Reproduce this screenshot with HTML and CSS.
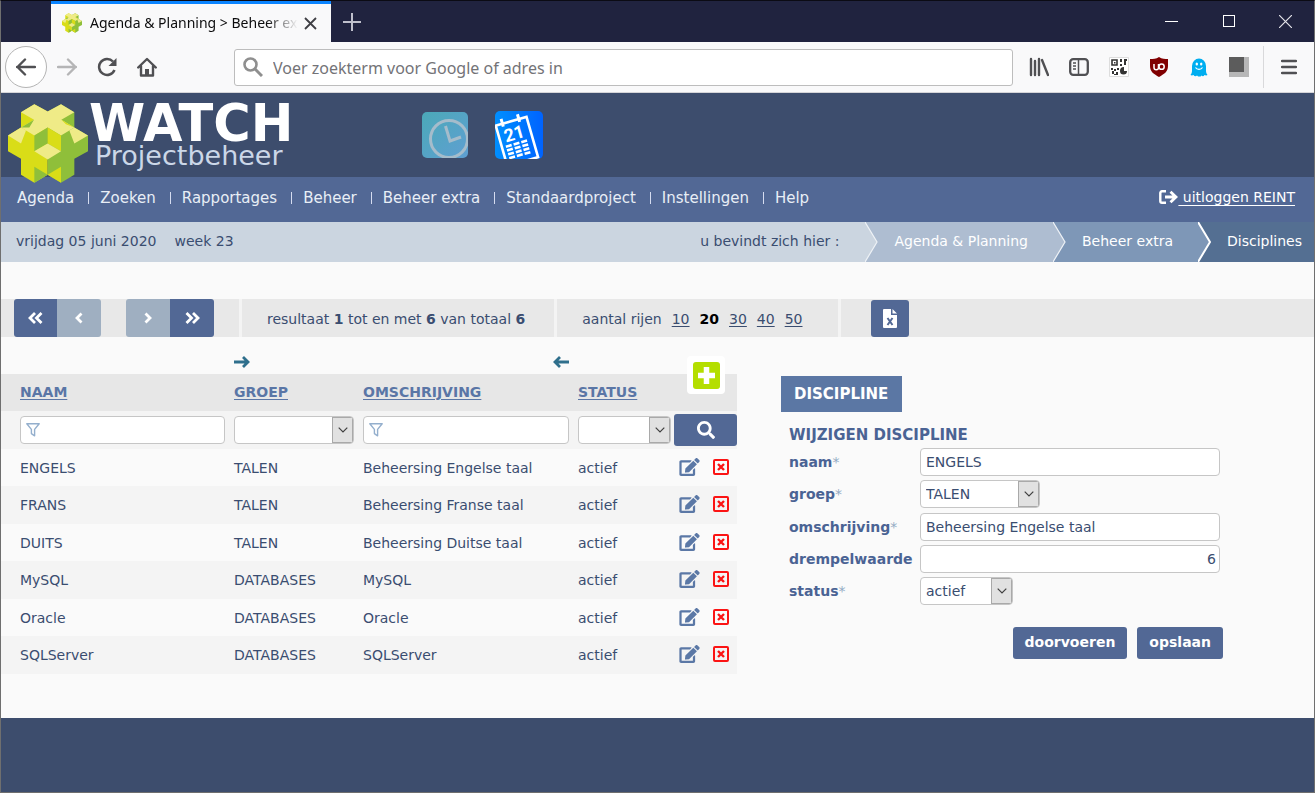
FILE: index.html
```html
<!DOCTYPE html>
<html lang="nl">
<head>
<meta charset="utf-8">
<title>Agenda &amp; Planning &gt; Beheer extra</title>
<link rel="stylesheet" href="styles.css">
</head>
<body>
<svg class="defs" aria-hidden="true">
  <symbol id="cube" viewBox="24 42 240 236">
    <path fill="#d9dd17" d="M63 66 103 42 143 64 143 254 103 278 63 254 63 206 24 183 24 136 63 112z"/>
    <path fill="#8fbf3a" d="M223 66 183 42 143 64 143 254 183 278 223 254 223 206 264 183 264 136 223 112z"/>
    <path fill="#efeb87" d="M63 66 103 42 143 64 183 42 223 66 184 89 223 112 183 136 143 112 103 136 63 112 102 89z"/>
    <path fill="#efeb87" d="M24 136 63 112 78 121 63 160zM264 136 223 112 208 121 223 160z"/>
    <path fill="#8fbf3a" d="M102 89 63 112 88 112zM103 136 143 112 143 160 103 183zM103 230 143 254 103 278z"/>
    <path fill="#d9dd17" d="M184 89 223 112 198 102zM143 112 183 136 183 183 143 160zM183 230 143 254 183 278z"/>
    <path fill="#efeb87" d="M103 183 143 160 183 183 143 208z"/>
  </symbol>
  <symbol id="edit" viewBox="0 0 576 512"><path fill="currentColor" d="M402.6 83.2l90.2 90.2c3.8 3.8 3.8 10 0 13.8L274.4 405.6l-92.8 10.3c-12.4 1.4-22.9-9.1-21.5-21.5l10.3-92.8L388.8 83.2c3.8-3.8 10-3.8 13.8 0zm162-22.9l-48.8-48.8c-15.2-15.2-39.9-15.2-55.2 0l-35.4 35.4c-3.8 3.8-3.8 10 0 13.8l90.2 90.2c3.8 3.8 10 3.8 13.8 0l35.4-35.4c15.2-15.3 15.2-40 0-55.2zM384 346.2V448H64V128h229.8c3.2 0 6.2-1.3 8.5-3.5l40-40c7.6-7.6 2.2-20.5-8.5-20.5H48C21.5 64 0 85.5 0 112v352c0 26.5 21.5 48 48 48h352c26.5 0 48-21.5 48-48V306.2c0-10.7-12.9-16-20.5-8.5l-40 40c-2.2 2.3-3.5 5.3-3.5 8.5z"/></symbol>
  <symbol id="delete" viewBox="0 0 16 16"><rect x="1" y="1" width="14" height="14" rx="1" fill="none" stroke="currentColor" stroke-width="2"/><path d="M5 5l6 6M11 5l-6 6" stroke="currentColor" stroke-width="2.4"/></symbol>
  <symbol id="search" viewBox="0 0 512 512"><path fill="currentColor" d="M505 442.7L405.3 343c-4.5-4.5-10.6-7-17-7H372c27.6-35.3 44-79.7 44-128C416 93.1 322.9 0 208 0S0 93.1 0 208s93.1 208 208 208c48.3 0 92.7-16.4 128-44v16.3c0 6.4 2.5 12.5 7 17l99.7 99.7c9.4 9.4 24.6 9.4 33.9 0l28.3-28.3c9.4-9.4 9.4-24.6.1-34zM208 336c-70.7 0-128-57.2-128-128 0-70.7 57.2-128 128-128 70.7 0 128 57.2 128 128 0 70.7-57.2 128-128 128z"/></symbol>
  <symbol id="funnel" viewBox="0 0 14 14"><path d="M.8.8h12.4L8.6 6.4v6.4L5.4 10.6V6.4z" fill="none" stroke="currentColor" stroke-width="1.4" stroke-linejoin="round"/></symbol>
  <symbol id="chevron" viewBox="0 0 10 6"><path d="M.7.7 5 5 9.300.7" fill="none" stroke="#404040" stroke-width="1.2"/></symbol>
  <symbol id="arrow" viewBox="0 0 16 12"><path d="M0 6h14M9 1l5 5-5 5" fill="none" stroke="currentColor" stroke-width="2.800"/></symbol>
</svg>

<div class="window">
  <div class="titlebar">
    <div class="tab">
      <svg width="20" height="20"><use href="#cube"/></svg>
      <span class="tab-title">Agenda &amp; Planning &gt; Beheer extra</span>
      <button class="plain" aria-label="Tabblad sluiten"><svg width="13" height="13" viewBox="0 0 13 13"><path d="M1 1l11 11M12 1 1 12" stroke="#3f3f44" stroke-width="1.800"/></svg></button>
    </div>
    <button class="plain new-tab" aria-label="Nieuw tabblad"><svg width="18" height="18" viewBox="0 0 18 18"><path d="M9 0v18M0 9h18" stroke="#bfc0cc" stroke-width="2"/></svg></button>
    <div class="window-buttons">
      <button class="plain" aria-label="Minimaliseren"><svg width="13" height="13" viewBox="0 0 13 13"><path d="M0 6.500h13" stroke="#fff"/></svg></button>
      <button class="plain" aria-label="Maximaliseren"><svg width="13" height="13" viewBox="0 0 13 13"><rect x="1.500" y=".5" width="11" height="11" fill="none" stroke="#fff"/></svg></button>
      <button class="plain" aria-label="Sluiten"><svg width="13" height="13" viewBox="0 0 13 13"><path d="M0 0l13 13M13 0 0 13" stroke="#e4e4ea" stroke-width="1.200"/></svg></button>
    </div>
  </div>

  <div class="browserbar">
    <div class="nav-buttons">
      <button class="plain back" aria-label="Terug"><svg width="20" height="18" viewBox="0 0 20 18"><path d="M1 9h18M9 1.500 1.500 9 9 16.500" fill="none" stroke="#505053" stroke-width="2.400" stroke-linecap="round" stroke-linejoin="round"/></svg></button>
      <button class="plain" aria-label="Vooruit"><svg width="20" height="18" viewBox="0 0 20 18"><path d="M1 9h18M11 1.500 18.500 9 11 16.500" fill="none" stroke="#b5b5b6" stroke-width="2.400" stroke-linecap="round" stroke-linejoin="round"/></svg></button>
      <button class="plain" aria-label="Vernieuwen"><svg width="20" height="20" viewBox="0 0 20 20"><path d="M17.500 13A8 8 0 1 1 16 4.500" fill="none" stroke="#505053" stroke-width="2.500"/><path d="M19.500 1v8h-8z" fill="#505053"/></svg></button>
      <button class="plain" aria-label="Startpagina"><svg width="20" height="20" viewBox="0 0 20 20"><path d="M1.200 10.500 10 2l8.800 8.500M4 9v9.500h12V9" fill="none" stroke="#505053" stroke-width="2.400" stroke-linejoin="round" stroke-linecap="round"/><path d="M8 19v-7h4v7" fill="#505053"/></svg></button>
    </div>
    <label class="urlbox">
      <svg width="20" height="20" viewBox="0 0 20 20"><circle cx="7.500" cy="7.500" r="6" fill="none" stroke="#8f8f8f" stroke-width="2.600"/><path d="M12 12l7 7" stroke="#8f8f8f" stroke-width="3"/></svg>
      <input type="text" aria-label="Adresbalk" placeholder="Voer zoekterm voor Google of adres in">
    </label>
    <div class="extensions">
      <button class="plain" aria-label="Bibliotheek"><svg width="20" height="20" viewBox="0 0 20 20"><path d="M2 2v16M6 4v14M10 2v16M13 3l6 15" stroke="#505053" stroke-width="2.400" fill="none" stroke-linecap="round"/></svg></button>
      <button class="plain" aria-label="Zijbalk"><svg width="20" height="20" viewBox="0 0 20 20"><rect x="1.200" y="2.200" width="17.600" height="15.600" rx="3" fill="none" stroke="#505053" stroke-width="2.300"/><path d="M9.500 2v16M4 6h3M4 9h3M4 12h3" stroke="#505053" stroke-width="1.500"/></svg></button>
      <button class="plain" aria-label="QR-code"><svg width="20" height="20" viewBox="0 0 20 20"><path fill="#fff" stroke="#ddd" d="M.5.5h19v19H.5z"/><path fill="none" stroke="#333" stroke-width="1.600" d="M3 3h5v5H3z"/><path fill="#333" d="M5 5h1.500v1.500H5zM11 2h2v3h-2zM15 2h3v2h-1v4h-2zM11 7h2v2h-2zM2 11h2v2H2zM5 12h2v2H5zM8 11h2v2H8zM3 14h2v3H3zM7 15h2v3H7zM5 17h2v1H5zM11 14a4 4 0 0 1 4-4v4h3a3.500 3.500 0 0 1-7 0z"/></svg></button>
      <button class="plain" aria-label="Blokkering"><svg width="20" height="20" viewBox="0 0 20 20"><path fill="#800000" d="M10 0c3 2 6 2 9 2v7c0 6-4 8-9 11C5 17 1 15 1 9V2c3 0 6 0 9-2z"/><path d="M5 7v3.500a2 2 0 0 0 4.500 0V7" fill="none" stroke="#fff" stroke-width="1.500"/><circle cx="12.600" cy="9.700" r="2.600" fill="none" stroke="#fff" stroke-width="1.500"/></svg></button>
      <button class="plain" aria-label="Ghostery"><svg width="20" height="20" viewBox="0 0 20 20"><path fill="#00aef0" d="M3 9a7 7.500 0 0 1 14 0v5c0 2 1 3 1.500 4-1 .6-2 .4-3 0-1 1.500-2 1.500-3 .4-1 1.600-3 1.600-4.500 0-1 1.100-2.500 1.100-3.500-.4-1 .4-2 .6-3 0C2 17 3 16 3 14z"/><ellipse cx="7.800" cy="7" rx="1.200" ry="1.600" fill="#fff"/><ellipse cx="12.200" cy="7" rx="1.200" ry="1.600" fill="#fff"/><path d="M6.500 10.500c1.500 2.500 5.500 2.500 7 0" fill="none" stroke="#fff" stroke-width="1.200"/></svg></button>
      <button class="plain" aria-label="Extensie"><svg width="20" height="20" viewBox="0 0 20 20"><path fill="#b7b7b7" d="M0 0h20v20H0z"/><path fill="#5c5c5c" d="M0 0h15v15H0z"/></svg></button>
    </div>
    <button class="plain menu" aria-label="Menu"><svg width="16" height="16" viewBox="0 0 16 16"><path d="M1 2h14M1 8h14M1 14h14" stroke="#505053" stroke-width="2.400" stroke-linecap="round"/></svg></button>
  </div>

  <header class="header">
    <a class="brand" href="#">
      <svg class="brand-mark" width="80" height="79"><use href="#cube"/></svg>
      <span class="brand-text"><strong>WATCH</strong><span>Projectbeheer</span></span>
    </a>
    <div class="apps">
      <a href="#" aria-label="Uren"><svg width="46" height="46" viewBox="0 0 46 46"><defs><linearGradient id="g1" x2="1" y2="1"><stop stop-color="#4ba9b8"/><stop offset="1" stop-color="#5f9fd2"/></linearGradient><clipPath id="c1"><rect width="46" height="46" rx="5"/></clipPath></defs><g clip-path="url(#c1)"><rect width="46" height="46" fill="url(#g1)"/><circle cx="27" cy="27" r="18.500" fill="none" stroke="#a5bccb" stroke-width="3"/><path d="M23.500 14 28 29l11-4" fill="none" stroke="#a5bccb" stroke-width="3"/></g></svg></a>
      <a href="#" aria-label="Agenda"><svg width="50" height="50" viewBox="0 0 50 50"><defs><linearGradient id="g2"><stop stop-color="#0090ff"/><stop offset="1" stop-color="#0062ff"/></linearGradient><clipPath id="c2"><rect x="1" y="1" width="48" height="48" rx="5"/></clipPath></defs><g clip-path="url(#c2)"><rect width="50" height="50" fill="url(#g2)"/><g transform="rotate(-16 24 28)" fill="none" stroke="#fff"><rect x="6" y="10" width="32" height="42" stroke-width="2.600"/><path d="M13 5v8M30 5v8" stroke-width="3"/><path d="M10 33h6M18 33h6M26 33h6M10 37h6M18 37h6M26 37h6M10 41h6M18 41h6M26 41h6M10 45h6M18 45h6M26 45h6" stroke-width="2.600"/></g><text x="11" y="30" transform="rotate(-16 20 28)" class="cal-number">21</text></g></svg></a>
    </div>
  </header>

  <nav class="mainnav">
    <ul>
      <li><a href="#">Agenda</a></li><li><a href="#">Zoeken</a></li><li><a href="#">Rapportages</a></li><li><a href="#">Beheer</a></li><li><a href="#">Beheer extra</a></li><li><a href="#">Standaardproject</a></li><li><a href="#">Instellingen</a></li><li><a href="#">Help</a></li>
    </ul>
    <a class="logout" href="#"><svg width="19" height="14" viewBox="0 0 19 14"><path d="M7 1.300H3A1.700 1.700 0 0 0 1.300 3v8A1.700 1.700 0 0 0 3 12.700h4" fill="none" stroke="#fff" stroke-width="2.400"/><path d="M6 7h10M11.500 1.800 17 7l-5.500 5.200" fill="none" stroke="#fff" stroke-width="2.800"/></svg><span>&nbsp;uitloggen REINT</span></a>
  </nav>

  <div class="trail">
    <span class="date">vrijdag 05 juni 2020</span><span>week 23</span>
    <span class="here">u bevindt zich hier :</span>
    <ol>
      <li class="crumb level1"><svg width="13" height="40" viewBox="0 0 13 40"><path fill="#cbd5e0" d="M0 0 12 20 0 40z"/><path d="M0 0 12 20 0 40" fill="none" stroke="#eef2f6" stroke-width="1.200"/></svg><a href="#">Agenda &amp; Planning</a></li>
      <li class="crumb level2"><svg width="13" height="40" viewBox="0 0 13 40"><path fill="#aebdd1" d="M0 0 12 20 0 40z"/><path d="M0 0 12 20 0 40" fill="none" stroke="#eef2f6" stroke-width="1.200"/></svg><a href="#">Beheer extra</a></li>
      <li class="crumb level3"><svg width="13" height="40" viewBox="0 0 13 40"><path fill="#7e97b7" d="M0 0 12 20 0 40z"/><path d="M0 0 12 20 0 40" fill="none" stroke="#fff" stroke-width="2"/></svg><a href="#">Disciplines</a></li>
    </ol>
  </div>

  <div class="pagebar">
    <div class="pager">
      <button class="first" aria-label="Eerste pagina"><svg width="15" height="14" viewBox="0 0 15 14"><path d="M7 2 2 7l5 5M13.500 2l-5 5 5 5" fill="none" stroke="#fff" stroke-width="2.800"/></svg></button><button class="prev" disabled aria-label="Vorige pagina"><svg width="8" height="12" viewBox="0 0 8 12"><path d="M6.500 1.500 2 6l4.500 4.500" fill="none" stroke="#fff" stroke-width="2.800"/></svg></button>
    </div>
    <div class="pager next-group">
      <button class="next" disabled aria-label="Volgende pagina"><svg width="8" height="12" viewBox="0 0 8 12"><path d="M1.500 1.500 6 6l-4.500 4.500" fill="none" stroke="#fff" stroke-width="2.800"/></svg></button><button class="last" aria-label="Laatste pagina"><svg width="15" height="14" viewBox="0 0 15 14"><path d="M1.500 2l5 5-5 5M8 2l5 5-5 5" fill="none" stroke="#fff" stroke-width="2.800"/></svg></button>
    </div>
    <p class="result">resultaat <b>1</b> tot en met <b>6</b> van totaal <b>6</b></p>
    <div class="pagesize"><span>aantal rijen</span><a href="#">10</a><b>20</b><a href="#">30</a><a href="#">40</a><a href="#">50</a></div>
    <button class="export" aria-label="Exporteren naar Excel"><svg width="14" height="19" viewBox="0 0 14 19"><path fill="#fff" d="M1 0h7v6h6v12a1 1 0 0 1-1 1H1a1 1 0 0 1-1-1V1a1 1 0 0 1 1-1zM9.500 0 14 4.500H9.500z"/><path d="M4.500 9l5 7M9.500 9l-5 7" stroke="#526895" stroke-width="2"/></svg></button>
  </div>

  <main class="content">
    <section class="list">
      <table>
        <colgroup><col class="c-name"><col class="c-group"><col class="c-desc"><col class="c-status"><col class="c-actions"></colgroup>
        <thead>
          <tr class="arrows"><td></td><td><svg width="16" height="12"><use href="#arrow"/></svg></td><td class="right"><svg class="flip" width="16" height="12"><use href="#arrow"/></svg></td><td></td><td></td></tr>
          <tr class="heads"><th><a href="#">NAAM</a></th><th><a href="#">GROEP</a></th><th><a href="#">OMSCHRIJVING</a></th><th><a href="#">STATUS</a></th><th class="add-cell"><button class="add" aria-label="Toevoegen"><svg width="27" height="27" viewBox="0 0 27 27"><rect width="27" height="27" rx="3" fill="#b4de00"/><path d="M13.500 5v17M5 13.500h17" stroke="#fff" stroke-width="5.500"/></svg></button></th></tr>
          <tr class="filters">
            <td><label class="filter"><svg width="14" height="14"><use href="#funnel"/></svg><input type="text" aria-label="Filter naam"></label></td>
            <td><span class="select"><select aria-label="Filter groep"><option></option><option>TALEN</option><option>DATABASES</option></select><span class="drop"><svg width="10" height="6"><use href="#chevron"/></svg></span></span></td>
            <td><label class="filter"><svg width="14" height="14"><use href="#funnel"/></svg><input type="text" aria-label="Filter omschrijving"></label></td>
            <td class="status-filter"><span class="select"><select aria-label="Filter status"><option></option><option>actief</option></select><span class="drop"><svg width="10" height="6"><use href="#chevron"/></svg></span></span></td>
            <td class="search-cell"><button class="search" aria-label="Zoeken"><svg width="18" height="18"><use href="#search"/></svg></button></td>
          </tr>
        </thead>
        <tbody>
          <tr><td>ENGELS</td><td>TALEN</td><td>Beheersing Engelse taal</td><td>actief</td><td class="actions"><a href="#" aria-label="Wijzigen"><svg width="21" height="18"><use href="#edit"/></svg></a><a class="del" href="#" aria-label="Verwijderen"><svg width="16" height="16"><use href="#delete"/></svg></a></td></tr>
          <tr><td>FRANS</td><td>TALEN</td><td>Beheersing Franse taal</td><td>actief</td><td class="actions"><a href="#" aria-label="Wijzigen"><svg width="21" height="18"><use href="#edit"/></svg></a><a class="del" href="#" aria-label="Verwijderen"><svg width="16" height="16"><use href="#delete"/></svg></a></td></tr>
          <tr><td>DUITS</td><td>TALEN</td><td>Beheersing Duitse taal</td><td>actief</td><td class="actions"><a href="#" aria-label="Wijzigen"><svg width="21" height="18"><use href="#edit"/></svg></a><a class="del" href="#" aria-label="Verwijderen"><svg width="16" height="16"><use href="#delete"/></svg></a></td></tr>
          <tr><td>MySQL</td><td>DATABASES</td><td>MySQL</td><td>actief</td><td class="actions"><a href="#" aria-label="Wijzigen"><svg width="21" height="18"><use href="#edit"/></svg></a><a class="del" href="#" aria-label="Verwijderen"><svg width="16" height="16"><use href="#delete"/></svg></a></td></tr>
          <tr><td>Oracle</td><td>DATABASES</td><td>Oracle</td><td>actief</td><td class="actions"><a href="#" aria-label="Wijzigen"><svg width="21" height="18"><use href="#edit"/></svg></a><a class="del" href="#" aria-label="Verwijderen"><svg width="16" height="16"><use href="#delete"/></svg></a></td></tr>
          <tr><td>SQLServer</td><td>DATABASES</td><td>SQLServer</td><td>actief</td><td class="actions"><a href="#" aria-label="Wijzigen"><svg width="21" height="18"><use href="#edit"/></svg></a><a class="del" href="#" aria-label="Verwijderen"><svg width="16" height="16"><use href="#delete"/></svg></a></td></tr>
        </tbody>
      </table>
    </section>

    <section class="detail">
      <h2>DISCIPLINE</h2>
      <form>
        <h3>WIJZIGEN DISCIPLINE</h3>
        <div class="fields">
          <label for="naam">naam<i>*</i></label><input id="naam" type="text" value="ENGELS">
          <label for="groep">groep<i>*</i></label><span class="select group"><select id="groep"><option>TALEN</option><option>DATABASES</option></select><span class="drop"><svg width="10" height="6"><use href="#chevron"/></svg></span></span>
          <label for="oms">omschrijving<i>*</i></label><input id="oms" type="text" value="Beheersing Engelse taal">
          <label for="dw">drempelwaarde</label><input id="dw" class="number" type="text" value="6">
          <label for="status">status<i>*</i></label><span class="select status"><select id="status"><option>actief</option><option>inactief</option></select><span class="drop"><svg width="10" height="6"><use href="#chevron"/></svg></span></span>
        </div>
        <div class="submit"><button type="button">doorvoeren</button><button type="button">opslaan</button></div>
      </form>
    </section>
  </main>
  <footer class="footer"></footer>
</div>
</body>
</html>
```
FILE: styles.css
```css
* { box-sizing: border-box; }
body { margin: 0; font-family: Verdana, "DejaVu Sans", sans-serif; font-size: 14px; line-height: 18px; color: #3a4d70; background: #fafafa; }
svg { display: block; flex: none; }
.defs { position: absolute; width: 0; height: 0; }
input, select, button { font: inherit; color: inherit; margin: 0; }
a { color: inherit; }
ul, ol, p, h2, h3 { margin: 0; padding: 0; list-style: none; }
.plain { display: flex; align-items: center; justify-content: center; padding: 0; border: 0; background: none; }

.window { display: flex; flex-direction: column; min-height: 100vh; border: 1px solid #6f6f6f; border-top-color: #0b0b14; }

/* Browser chrome */
.titlebar { display: flex; height: 41px; padding-left: 50px; background: #20233f; }
.tab { display: flex; align-items: center; width: 280px; padding: 0 14px 0 11px; background: #f9f9fa; border-top: 3px solid #0a84ff; }
.tab-title { flex: 1; min-width: 0; margin: 0 6px 0 8px; overflow: hidden; white-space: nowrap; font: 14px/20px "Noto Sans", sans-serif; color: #0c0c0d; -webkit-mask-image: linear-gradient(90deg, #000 85%, transparent); mask-image: linear-gradient(90deg, #000 85%, transparent); }
.new-tab { margin-left: 12px; }
.window-buttons { display: flex; gap: 44px; margin-left: auto; padding-right: 22px; }
.browserbar { display: flex; align-items: center; height: 51px; background: #f9f9fa; border-bottom: 1px solid #d5d5d8; }
.nav-buttons { display: flex; align-items: center; gap: 20px; width: 233px; padding-left: 4px; }
.back { width: 42px; height: 42px; margin-right: -10px; border: 1px solid #b4b4b4; border-radius: 50%; background: #fff; }
.urlbox { display: flex; flex: 1; align-items: center; gap: 10px; height: 37px; padding: 0 8px; border: 1px solid #bdbdbd; border-radius: 3px; background: #fff; }
.urlbox input { flex: 1; min-width: 0; padding: 2px 0 0; border: 0; outline: 0; background: none; font: 16px/24px "Noto Sans", sans-serif; }
.urlbox input::placeholder { color: #737377; opacity: 1; }
.extensions { display: flex; gap: 20px; padding: 0 14px 0 16px; }
.menu { width: 51px; height: 42px; border-left: 1px solid #d9d9db; }

/* Application header */
.header { display: flex; align-items: flex-start; height: 84px; background: #3d4d6d; }
.brand { position: relative; z-index: 1; display: flex; align-items: flex-start; gap: 1px; margin-bottom: -8px; padding: 11px 0 0 7px; text-decoration: none; }
.brand-text { display: flex; flex-direction: column; color: #fff; }
.brand-text strong { font-size: 51px; line-height: 40px; }
.brand-text span { padding-left: 6px; font-size: 27px; line-height: 24px; color: #cbd7e8; }
.apps { display: flex; align-items: center; gap: 26px; margin: 17px 0 0 129px; }
.cal-number { font: bold 18px Roboto, sans-serif; fill: #fff; }

.mainnav { display: flex; justify-content: space-between; align-items: flex-start; height: 45px; padding: 11px 19px 0 16px; background: #526895; color: #e8eef6; font-size: 15px; line-height: 20px; }
.mainnav ul { display: flex; }
.mainnav li + li::before { content: ""; display: inline-block; width: 1px; height: 12px; margin: 0 11px 0 14px; vertical-align: -1px; background: #d5dcf0; }
.mainnav li a { text-decoration: none; }
.logout { display: flex; align-items: center; font-size: 14px; line-height: 18px; text-decoration: none; color: #fff; }
.logout span { text-decoration: underline; text-decoration-thickness: 1px; text-underline-offset: 3px; }

.trail { display: flex; height: 40px; padding-left: 15px; background: #cbd5e0; line-height: 38px; white-space: nowrap; }
.date { margin-right: 18px; }
.here { margin-left: auto; padding-right: 26px; }
.trail ol, .crumb { display: flex; }
.crumb { gap: 16px; padding-right: 25px; color: #fff; }
.crumb a { text-decoration: none; }
.level1 { background: #aebdd1; }
.level2 { background: #7e97b7; }
.level3 { background: #546f92; padding-right: 12px; }

/* Paging */
.pagebar { display: flex; align-items: stretch; height: 38px; margin-top: 37px; padding-left: 13px; background: #e8e8e8; line-height: 40px; white-space: nowrap; }
.pager { display: flex; }
.pager button { display: flex; align-items: center; justify-content: center; width: 44px; padding: 0; border: 0; background: #526895; }
.pager .first { width: 43px; }
.pager button:disabled { background: #9fafc1; }
.first, .next { border-radius: 3px 0 0 3px; }
.prev, .last { border-radius: 0 3px 3px 0; }
.next-group { margin: 0 25px; }
.result, .pagesize { padding: 0 25px; border-left: 3px solid #f4f4f4; }
.result { padding-right: 29px; }
.pagesize { display: flex; gap: 10px; padding-right: 35px; border-right: 3px solid #f4f4f4; }
.pagesize a, .heads a { text-underline-offset: 2px; text-decoration-thickness: 1px; }
.pagesize b { color: #000; }
.export { display: flex; align-items: center; justify-content: center; width: 38px; margin: 1px 0 0 30px; padding: 0; border: 0; border-radius: 3px; background: #526895; }

/* List */
.content { display: grid; grid-template-columns: minmax(0, 736fr) minmax(0, 533fr); column-gap: 44px; align-items: start; padding-bottom: 44px; }
table { width: 100%; table-layout: fixed; border-collapse: collapse; }
.c-name { width: 233px; }
.c-group { width: 129px; }
.c-desc { width: 215px; }
.c-status { width: 96px; }
.c-actions { width: 63px; }
th, td { padding: 0 9px 0 0; text-align: left; }
th:first-child, td:first-child { padding-left: 19px; }
.arrows { height: 37px; color: #2f6f8c; }
.arrows svg { margin-top: 13px; }
.arrows .right svg { margin-left: auto; }
.flip { transform: scaleX(-1); }
.heads { height: 37px; background: #e7e7e7; color: #5a76a6; }
.heads th { padding-bottom: 2px; }
.add-cell { position: relative; }
.add { position: absolute; left: 13px; top: -18px; display: flex; align-items: center; justify-content: center; width: 38px; height: 38px; padding: 0; border: 0; border-radius: 4px; background: #fff; }
.filters { height: 38px; background: #f4f4f4; }
.filter { display: flex; align-items: center; height: 28px; padding-left: 5px; border: 1px solid #c6c6c6; border-radius: 4px; background: #fff; color: #94afcd; }
.filter input { width: 100%; min-width: 0; border: 0; outline: 0; background: none; color: #3a4d70; }
.select { display: grid; height: 28px; border: 1px solid #c6c6c6; border-radius: 4px; background: #fff; overflow: hidden; }
.select select, .drop { grid-area: 1 / 1; }
.select select { appearance: none; width: 100%; padding: 0 24px 0 5px; border: 0; outline: 0; background: none; }
.drop { display: flex; align-items: center; justify-content: center; justify-self: end; width: 21px; border: 1px solid #a9a9a9; background: #e1e1e1; pointer-events: none; }
.filters .status-filter { padding-right: 3px; }
.filters .search-cell { padding: 0; }
.search { display: flex; align-items: center; justify-content: center; width: 100%; height: 32px; padding: 0; border: 0; border-radius: 3px; background: #526895; color: #fff; }
tbody tr { height: 37px; }
tbody tr:nth-child(even) { height: 38px; background: #f4f4f4; }
.actions { padding: 0 0 3px 5px; white-space: nowrap; color: #5b78a6; }
.actions a { display: inline-block; vertical-align: middle; }
.actions .del { margin-left: 13px; color: #fb1414; }

/* Detail form */
.detail { padding-top: 39px; }
.detail h2 { width: max-content; padding: 0 14px 0 13px; background: #5b77a4; color: #fff; font-size: 15px; line-height: 36px; }
.detail form { padding: 14px 0 0 8px; color: #4a6394; }
.detail h3 { font-size: 15px; line-height: 18px; }
.fields { display: grid; grid-template-columns: 131px minmax(0, 300px); grid-template-rows: 33px 32px 33px 32px 32px; align-items: center; margin-top: 1px; }
.fields label { font-weight: bold; }
.fields label i { font-style: normal; font-weight: normal; color: #93aac4; }
.fields input { width: 100%; height: 28px; padding: 0 5px; border: 1px solid #c6c6c6; border-radius: 4px; background: #fff; color: #3a4d70; }
.fields .number { padding-right: 3px; text-align: right; }
.fields .select { color: #3a4d70; }
.group { width: 120px; }
.status { width: 93px; }
.submit { display: flex; justify-content: flex-end; gap: 10px; max-width: 434px; margin-top: 20px; }
.submit button { height: 32px; padding: 0 12px 2px; border: 0; border-radius: 3px; background: #526895; color: #fff; font-weight: bold; }
.footer { flex: 1; min-height: 74px; background: #3d4d6d; }
```
